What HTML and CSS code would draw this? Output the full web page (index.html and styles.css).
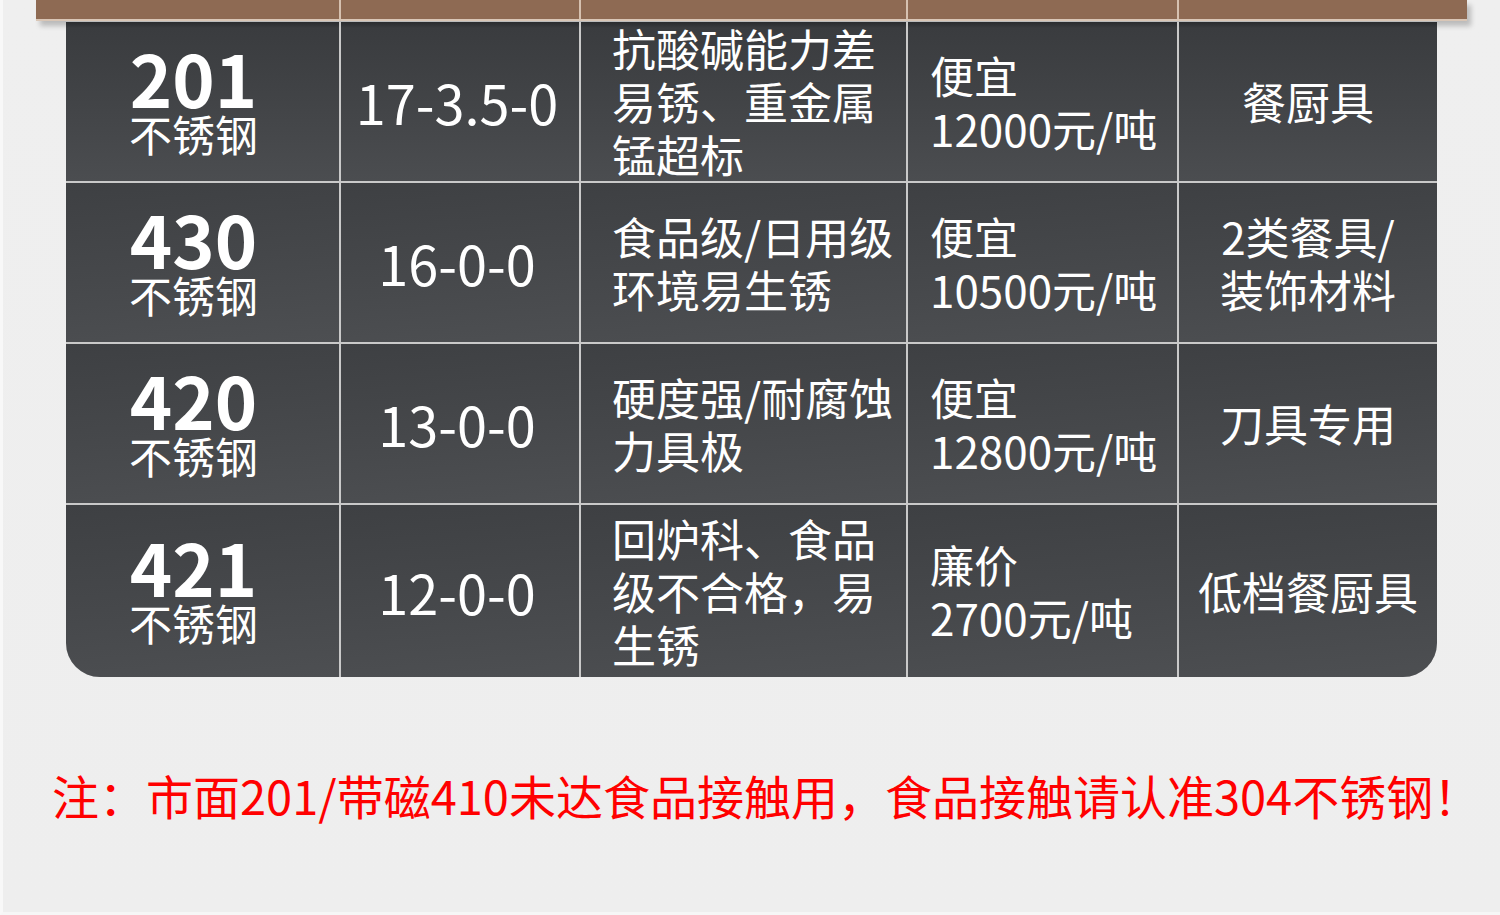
FILE: index.html
```html
<!DOCTYPE html>
<html lang="zh-CN">
<head>
<meta charset="utf-8">
<title>不锈钢对比</title>
<link rel="stylesheet" href="styles.css">
</head>
<body>
<div class="page">
  <div class="head-bar">
    <div class="head-cell"></div>
    <div class="head-cell"></div>
    <div class="head-cell"></div>
    <div class="head-cell"></div>
    <div class="head-cell"></div>
  </div>
  <div class="table">
    <div class="cell top c-grade"><span class="grade-num">201</span><span class="grade-name">不锈钢</span></div>
    <div class="cell top c-ratio">17-3.5-0</div>
    <div class="cell top c-desc">抗酸碱能力差<br>易锈、重金属<br>锰超标</div>
    <div class="cell top c-price">便宜<br>12000元/吨</div>
    <div class="cell top c-use">餐厨具</div>

    <div class="cell c-grade"><span class="grade-num">430</span><span class="grade-name">不锈钢</span></div>
    <div class="cell c-ratio">16-0-0</div>
    <div class="cell c-desc">食品级/日用级<br>环境易生锈</div>
    <div class="cell c-price">便宜<br>10500元/吨</div>
    <div class="cell c-use">2类餐具/<br>装饰材料</div>

    <div class="cell c-grade"><span class="grade-num">420</span><span class="grade-name">不锈钢</span></div>
    <div class="cell c-ratio">13-0-0</div>
    <div class="cell c-desc">硬度强/耐腐蚀<br>力具极</div>
    <div class="cell c-price">便宜<br>12800元/吨</div>
    <div class="cell c-use">刀具专用</div>

    <div class="cell c-grade"><span class="grade-num">421</span><span class="grade-name">不锈钢</span></div>
    <div class="cell c-ratio">12-0-0</div>
    <div class="cell c-desc">回炉科、食品<br>级不合格，易<br>生锈</div>
    <div class="cell c-price">廉价<br>2700元/吨</div>
    <div class="cell c-use">低档餐厨具</div>
  </div>
  <p class="note">注：市面201/带磁410未达食品接触用，食品接触请认准304不锈钢！</p>
</div>
</body>
</html>
```

FILE: styles.css
```css
html, body {
  margin: 0;
  padding: 0;
  background: #efefef;
}

body {
  font-family: "Noto Sans CJK SC", "Noto Sans", sans-serif;
}

.page {
  width: 1500px;
  height: 915px;
  box-sizing: border-box;
  border-left: 3px solid #f8f8f8;
  border-bottom: 3px solid #f6f6f6;
  background: linear-gradient(180deg, #efefef 0%, #eeeeee 100%);
  overflow: hidden;
}

.head-bar {
  margin-left: 33px;
  width: 1431px;
  height: 19px;
  display: grid;
  grid-template-columns: 303px 238px 325px 269px 288px;
  column-gap: 2px;
  background: #d6c1b0;
  border-bottom: 2px solid #d9c6b6;
  box-shadow: 4px 5px 5px rgba(0, 0, 0, 0.22);
}

.head-cell {
  background: #8e6a53;
}

.table {
  margin: 1px 0 0 63px;
  width: 1371px;
  display: grid;
  grid-template-columns: 273px 238px 325px 269px 258px;
  grid-template-rows: 159px 159px 159px 172px;
  gap: 2px;
  background: #c9c9c9;
  border-radius: 0 0 34px 34px;
  overflow: hidden;
}

.cell {
  display: flex;
  align-items: center;
  color: #ffffff;
  font-size: 44px;
  line-height: 53px;
  white-space: nowrap;
  background: linear-gradient(175deg, #3e4043 0%, #46484b 55%, #4d4f52 100%);
}

.cell.top {
  background: linear-gradient(180deg, #2a2c2f 0px, #3a3c3f 6px, #404245 40%, #4b4d50 100%);
}

.c-grade {
  flex-direction: column;
  justify-content: center;
  padding-right: 18px;
}

.grade-num {
  font-weight: 700;
  font-size: 72px;
  line-height: 60px;
  padding-bottom: 2px;
}

.grade-name {
  font-size: 43px;
  line-height: 48px;
}

.c-ratio {
  justify-content: center;
  font-size: 54px;
  padding-right: 6px;
}

.c-desc {
  padding-left: 31px;
}

.c-price {
  padding-left: 22px;
}

.c-use {
  justify-content: center;
  text-align: center;
}

.note {
  margin: 88px 0 0 49px;
  font-size: 47px;
  line-height: 60px;
  color: #ff0000;
  white-space: nowrap;
}
```
